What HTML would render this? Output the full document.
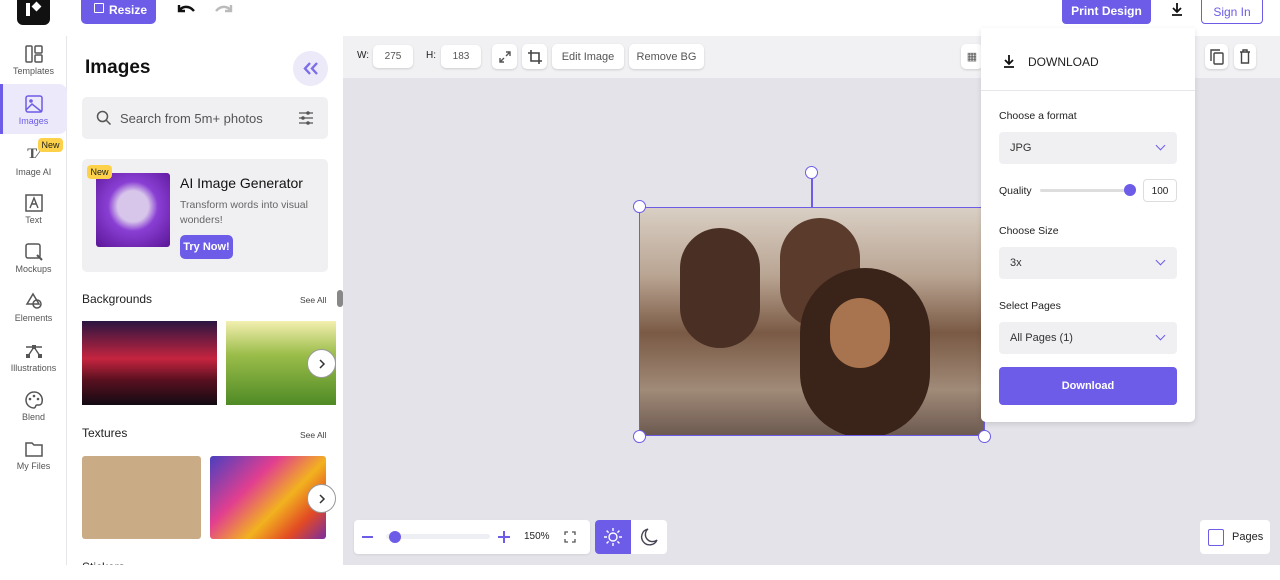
<!DOCTYPE html><html><head><style>
*{box-sizing:border-box;margin:0;padding:0}
body{width:1280px;height:580px;overflow:hidden;font-family:"Liberation Sans",sans-serif;background:#fff;position:relative;color:#222}
.abs{position:absolute}
.side{left:0;top:36px;width:67px;height:529px;background:#fff;border-right:1px solid #e6e6ea}
.si{position:absolute;left:0;width:67px;text-align:center;font-size:9px;color:#555}
.si svg{display:block;margin:0 auto 3px}
.btn{background:#fff;border-radius:5px;box-shadow:0 1px 2px rgba(0,0,0,.15);font-size:11px;color:#555;display:flex;align-items:center;justify-content:center}
.dd{position:absolute;left:999px;width:178px;height:32px;background:#f0f0f3;border-radius:4px;font-size:11px;color:#333;padding:10px 11px}
.dd:after{content:"";position:absolute;right:13px;top:10px;width:6px;height:6px;border-right:1.5px solid #6c5ce7;border-bottom:1.5px solid #6c5ce7;transform:rotate(45deg)}
.lbl{position:absolute;left:999px;font-size:11px;color:#222}
.arr{position:absolute;width:29px;height:29px;border-radius:50%;background:#fff;border:1px solid #999}
</style></head><body>
<!-- top bar -->
<div class="abs" style="left:17px;top:0;width:33px;height:25px;background:#111;border-radius:0 0 6px 6px"><div class="abs" style="left:9px;top:3px;width:4px;height:13px;background:#fff"></div><div class="abs" style="left:16px;top:3px;width:7px;height:7px;background:#fff;transform:rotate(45deg)"></div></div>
<div class="abs" style="left:81px;top:-6px;width:75px;height:30px;background:#6c5ce7;border-radius:5px;color:#fff;font-weight:bold;font-size:12px;padding:9px 0 0 28px">Resize<div class="abs" style="left:13px;top:9px;width:10px;height:10px;border:1.5px solid #fff;border-radius:1px"></div></div>
<svg class="abs" style="left:175px;top:2px" width="22" height="14"><path d="M4 3v6h6M4 9c3-5 10-6 15 0" fill="none" stroke="#111" stroke-width="2.4"/></svg>
<svg class="abs" style="left:213px;top:2px" width="22" height="14"><path d="M18 3v6h-6M18 9c-3-5-10-6-15 0" fill="none" stroke="#bbb" stroke-width="2.4"/></svg>
<div class="abs" style="left:1062px;top:-6px;width:89px;height:30px;background:#6c5ce7;border-radius:4px;color:#fff;font-size:12px;font-weight:bold;padding-top:10px;text-align:center">Print Design</div>
<svg class="abs" style="left:1170px;top:2px" width="14" height="14"><path d="M7 1v9M3 6l4 4 4-4M2 13h10" fill="none" stroke="#111" stroke-width="1.8"/></svg>
<div class="abs" style="left:1201px;top:-6px;width:62px;height:30px;border:1px solid #6c5ce7;border-radius:4px;color:#6c5ce7;font-size:12px;padding-top:10px;text-align:center">Sign In</div>
<!-- canvas area -->
<div class="abs" style="left:343px;top:36px;width:937px;height:529px;background:#e3e3e9"></div>
<div class="abs" style="left:343px;top:36px;width:937px;height:42px;background:#f1f1f4"></div>
<div class="abs" style="left:357px;top:50px;font-size:10px">W:</div>
<div class="abs btn" style="left:373px;top:45px;width:40px;height:23px;font-size:10px">275</div>
<div class="abs" style="left:426px;top:50px;font-size:10px">H:</div>
<div class="abs btn" style="left:441px;top:45px;width:40px;height:23px;font-size:10px">183</div>
<div class="abs btn" style="left:492px;top:44px;width:25px;height:25px"><svg width="14" height="14"><path d="M8 2h4v4M12 2L8 6M6 12H2V8M2 12l4-4" fill="none" stroke="#555" stroke-width="1.4"/></svg></div>
<div class="abs btn" style="left:522px;top:44px;width:25px;height:25px"><svg width="16" height="16"><path d="M4 1v11h11M1 4h11v11" fill="none" stroke="#444" stroke-width="1.6"/></svg></div>
<div class="abs btn" style="left:552px;top:44px;width:72px;height:25px">Edit Image</div>
<div class="abs btn" style="left:629px;top:44px;width:75px;height:25px">Remove BG</div>
<div class="abs btn" style="left:961px;top:44px;width:22px;height:25px">▦</div>
<div class="abs btn" style="left:1205px;top:44px;width:23px;height:25px"><svg width="14" height="16"><rect x="4" y="4" width="9" height="11" rx="1" fill="none" stroke="#444" stroke-width="1.4"/><path d="M1 12V1h9" fill="none" stroke="#444" stroke-width="1.4"/></svg></div>
<div class="abs btn" style="left:1234px;top:44px;width:22px;height:25px"><svg width="12" height="15"><path d="M1 3h10M4 3V1h4v2M2.5 3v11h7V3" fill="none" stroke="#444" stroke-width="1.4"/></svg></div>
<!-- image -->
<div class="abs" style="left:639px;top:207px;width:346px;height:229px;background:linear-gradient(180deg,#d9cfc4 0%,#b9a492 30%,#7a5a45 55%,#a08a78 80%,#6d5a50 100%);border:1.5px solid #6c5ce7;overflow:hidden">
<div class="abs" style="left:40px;top:20px;width:80px;height:120px;background:#4a2f24;border-radius:40px"></div>
<div class="abs" style="left:140px;top:10px;width:80px;height:110px;background:#5a3b2c;border-radius:40px"></div>
<div class="abs" style="left:160px;top:60px;width:130px;height:170px;background:#3a2318;border-radius:65px"></div>
<div class="abs" style="left:190px;top:90px;width:60px;height:70px;background:#a8734f;border-radius:30px"></div>
</div>
<div class="abs" style="left:811px;top:178px;width:1.5px;height:29px;background:#6c5ce7"></div>
<div class="abs" style="left:805px;top:166px;width:13px;height:13px;border:1.5px solid #6c5ce7;border-radius:50%;background:#fff"></div>
<div class="abs" style="left:633px;top:200px;width:13px;height:13px;border:1.5px solid #6c5ce7;border-radius:50%;background:#fff"></div>
<div class="abs" style="left:633px;top:430px;width:13px;height:13px;border:1.5px solid #6c5ce7;border-radius:50%;background:#fff"></div>
<div class="abs" style="left:978px;top:430px;width:13px;height:13px;border:1.5px solid #6c5ce7;border-radius:50%;background:#fff"></div>
<!-- zoom bar -->
<div class="abs" style="left:354px;top:520px;width:236px;height:34px;background:#fff;border-radius:4px;box-shadow:0 1px 2px rgba(0,0,0,.08)"></div>
<div class="abs" style="left:362px;top:536px;width:11px;height:2px;background:#6c5ce7"></div>
<div class="abs" style="left:386px;top:534px;width:104px;height:5px;background:#eeeff4;border-radius:3px"></div>
<div class="abs" style="left:389px;top:531px;width:12px;height:12px;border-radius:50%;background:#6c5ce7"></div>
<div class="abs" style="left:498px;top:536px;width:12px;height:2px;background:#6c5ce7"></div>
<div class="abs" style="left:503px;top:531px;width:2px;height:12px;background:#6c5ce7"></div>
<div class="abs" style="left:524px;top:531px;font-size:10px">150%</div>
<svg class="abs" style="left:564px;top:531px" width="12" height="12"><path d="M1 4V1h3M8 1h3v3M11 8v3H8M4 11H1V8" fill="none" stroke="#555" stroke-width="1.3"/></svg>
<div class="abs" style="left:595px;top:520px;width:72px;height:34px;background:#fff;border-radius:4px"></div>
<div class="abs" style="left:595px;top:520px;width:36px;height:34px;background:#6c5ce7;border-radius:4px 0 0 4px"></div>
<svg class="abs" style="left:603px;top:527px" width="20" height="20"><circle cx="10" cy="10" r="4" fill="none" stroke="#fff" stroke-width="1.4"/><path d="M10 1v3M10 16v3M1 10h3M16 10h3M3.6 3.6l2 2M14.4 14.4l2 2M3.6 16.4l2-2M14.4 5.6l2-2" stroke="#fff" stroke-width="1.4"/></svg>
<svg class="abs" style="left:639px;top:527px" width="20" height="20"><path d="M9 2a8 8 0 109 11A7 7 0 019 2z" fill="none" stroke="#445" stroke-width="1.4"/></svg>
<div class="abs" style="left:1200px;top:520px;width:70px;height:34px;background:#fff;border-radius:4px;font-size:11px;padding:11px 0 0 32px">Pages<div class="abs" style="left:8px;top:9px;width:16px;height:17px;border:1.5px solid #6c5ce7;border-radius:2px"></div></div>
<!-- download panel -->
<div class="abs" style="left:981px;top:28px;width:214px;height:394px;background:#fff;box-shadow:0 2px 6px rgba(0,0,0,.12);border-radius:0 0 5px 5px"></div>
<svg class="abs" style="left:1003px;top:54px" width="12" height="14"><path d="M6 1v9M2 6l4 4 4-4M1 13h10" fill="none" stroke="#111" stroke-width="1.8"/></svg>
<div class="abs" style="left:1028px;top:55px;font-size:12px">DOWNLOAD</div>
<div class="abs" style="left:981px;top:90px;width:214px;height:1px;background:#e6e6ea"></div>
<div class="lbl" style="top:110px;font-size:10.5px">Choose a format</div>
<div class="dd" style="top:132px">JPG</div>
<div class="lbl" style="top:185px;font-size:10.5px">Quality</div>
<div class="abs" style="left:1040px;top:189px;width:94px;height:3px;background:#ddd;border-radius:2px"></div>
<div class="abs" style="left:1124px;top:184px;width:12px;height:12px;border-radius:50%;background:#6c5ce7"></div>
<div class="abs" style="left:1143px;top:179px;width:34px;height:23px;border:1px solid #ddd;border-radius:4px;font-size:10px;text-align:center;padding-top:6px">100</div>
<div class="lbl" style="top:225px;font-size:10.5px">Choose Size</div>
<div class="dd" style="top:247px">3x</div>
<div class="lbl" style="top:300px;font-size:10.5px">Select Pages</div>
<div class="dd" style="top:322px">All Pages (1)</div>
<div class="abs" style="left:999px;top:367px;width:178px;height:38px;background:#6c5ce7;border-radius:4px;color:#fff;font-size:11px;font-weight:bold;text-align:center;padding-top:13px">Download</div>
<!-- sidebar -->
<div class="abs side"></div>
<div class="abs" style="left:0;top:84px;width:67px;height:50px;background:#ece9fb;border-radius:0 8px 8px 0;border-left:3px solid #6c5ce7"></div>
<div class="si" style="top:45px"><svg width="18" height="18"><rect x="1" y="1" width="6" height="16" rx="1" fill="none" stroke="#555" stroke-width="1.5"/><rect x="10" y="1" width="7" height="7" rx="1" fill="none" stroke="#555" stroke-width="1.5"/><rect x="10" y="10" width="7" height="7" rx="1" fill="none" stroke="#555" stroke-width="1.5"/></svg>Templates</div>
<div class="si" style="top:95px;color:#6c5ce7"><svg width="18" height="18"><rect x="1" y="1" width="16" height="16" rx="2" fill="none" stroke="#6c5ce7" stroke-width="1.5"/><circle cx="6" cy="6" r="1.8" fill="#6c5ce7"/><path d="M1 15l6-6 10 8" fill="none" stroke="#6c5ce7" stroke-width="1.5"/></svg>Images</div>
<div class="si" style="top:146px"><div style="font-family:'Liberation Serif';font-weight:bold;font-size:15px;height:18px;margin-bottom:3px">T⁄</div>Image AI</div>
<div class="abs" style="left:38px;top:138px;width:25px;height:14px;background:#fdd14a;border-radius:4px;font-size:9px;text-align:center;padding-top:2px">New</div>
<div class="si" style="top:194px"><svg width="18" height="18"><rect x="1" y="1" width="16" height="16" fill="none" stroke="#555" stroke-width="1.5"/><path d="M5 14L9 4l4 10M6.5 10h5" fill="none" stroke="#555" stroke-width="1.4"/></svg>Text</div>
<div class="si" style="top:243px"><svg width="18" height="18"><rect x="1" y="1" width="14" height="14" rx="2" fill="none" stroke="#555" stroke-width="1.5"/><path d="M12 12l5 5" stroke="#555" stroke-width="2"/></svg>Mockups</div>
<div class="si" style="top:292px"><svg width="18" height="18"><path d="M8 2l6 10H2z" fill="none" stroke="#555" stroke-width="1.5"/><circle cx="12" cy="12" r="4" fill="none" stroke="#555" stroke-width="1.5"/></svg>Elements</div>
<div class="si" style="top:342px"><svg width="20" height="18"><path d="M2 5h16M10 5l-6 9M10 5l6 9" fill="none" stroke="#555" stroke-width="1.4"/><rect x="8" y="3" width="4" height="4" fill="#555"/><rect x="2" y="12" width="4" height="4" fill="#555"/><rect x="14" y="12" width="4" height="4" fill="#555"/></svg>Illustrations</div>
<div class="si" style="top:391px"><svg width="18" height="18"><path d="M9 1a8 8 0 100 16c2 0 1-3 3-3h2a3 3 0 003-3A8 8 0 009 1z" fill="none" stroke="#555" stroke-width="1.5"/><circle cx="5" cy="8" r="1.3" fill="#555"/><circle cx="9" cy="5" r="1.3" fill="#555"/><circle cx="13" cy="8" r="1.3" fill="#555"/></svg>Blend</div>
<div class="si" style="top:440px"><svg width="18" height="18"><path d="M1 3h6l2 2h8v11H1z" fill="none" stroke="#555" stroke-width="1.5"/></svg>My Files</div>
<!-- panel -->
<div class="abs" style="left:67px;top:36px;width:276px;height:529px;background:#fff;border-radius:0 22px 0 0;overflow:hidden">
<div class="abs" style="left:18px;top:21px;font-size:19px;font-weight:bold;color:#111">Images</div>
<div class="abs" style="left:226px;top:15px;width:35px;height:35px;border-radius:50%;background:#ece9f8"><svg style="position:absolute;left:10px;top:11px" width="16" height="13"><path d="M7 1L2 6.5 7 12M14 1L9 6.5 14 12" fill="none" stroke="#7b6ee8" stroke-width="2.4"/></svg></div>
<div class="abs" style="left:15px;top:61px;width:246px;height:42px;background:#f0f0f3;border-radius:5px;font-size:13px;color:#555;padding:14px 0 0 38px">Search from 5m+ photos
<svg class="abs" style="left:14px;top:13px" width="16" height="16"><circle cx="6.5" cy="6.5" r="5" fill="none" stroke="#555" stroke-width="1.5"/><path d="M10 10l4.5 4.5" stroke="#555" stroke-width="1.5"/></svg>
<svg class="abs" style="left:216px;top:13px" width="16" height="16"><path d="M1 3h14M1 8h14M1 13h14" stroke="#555" stroke-width="1.3"/><circle cx="10" cy="3" r="1.8" fill="#555"/><circle cx="5" cy="8" r="1.8" fill="#555"/><circle cx="10" cy="13" r="1.8" fill="#555"/></svg></div>
<div class="abs" style="left:15px;top:123px;width:246px;height:113px;background:#f0f0f3;border-radius:5px"></div>
<div class="abs" style="left:29px;top:137px;width:74px;height:74px;border-radius:3px;background:radial-gradient(circle at 50% 45%,#d7c6ea 0 28%,#8a3fd4 45%,#5a1596 100%)"></div>
<div class="abs" style="left:20px;top:129px;width:25px;height:14px;background:#fdd14a;border-radius:4px;font-size:9px;text-align:center;padding-top:2px">New</div>
<div class="abs" style="left:113px;top:139px;font-size:14px;color:#111">AI Image Generator</div>
<div class="abs" style="left:113px;top:162px;font-size:10.5px;color:#666;line-height:15px;width:140px">Transform words into visual wonders!</div>
<div class="abs" style="left:113px;top:199px;width:53px;height:24px;background:#6c5ce7;border-radius:5px;color:#fff;font-size:11px;font-weight:bold;text-align:center;padding-top:6px">Try Now!</div>
<div class="abs" style="left:15px;top:256px;font-size:12px">Backgrounds</div>
<div class="abs" style="left:233px;top:259px;font-size:8.5px;color:#444">See All</div>
<div class="abs" style="left:15px;top:285px;width:135px;height:84px;background:linear-gradient(180deg,#2a1540 0%,#c6243f 45%,#5a1020 70%,#120a12 100%)"></div>
<div class="abs" style="left:159px;top:285px;width:110px;height:84px;background:linear-gradient(180deg,#f3efb0 0%,#9bbd4a 40%,#4f8a25 100%)"></div>
<div class="arr" style="left:240px;top:313px"><svg style="position:absolute;left:10px;top:9px" width="8" height="10"><path d="M2 1l4 4-4 4" fill="none" stroke="#333" stroke-width="1.5"/></svg></div>
<div class="abs" style="left:15px;top:390px;font-size:12px">Textures</div>
<div class="abs" style="left:233px;top:394px;font-size:8.5px;color:#444">See All</div>
<div class="abs" style="left:15px;top:420px;width:119px;height:83px;background:#c9ac85;border-radius:3px"></div>
<div class="abs" style="left:143px;top:420px;width:116px;height:83px;border-radius:3px;background:linear-gradient(135deg,#4a3fc0,#e23f8f 35%,#f2b21f 60%,#e24a24 80%,#7a2da0)"></div>
<div class="arr" style="left:240px;top:448px"><svg style="position:absolute;left:10px;top:9px" width="8" height="10"><path d="M2 1l4 4-4 4" fill="none" stroke="#333" stroke-width="1.5"/></svg></div>
<div class="abs" style="left:15px;top:524px;font-size:12px">Stickers</div>
<div class="abs" style="left:270px;top:254px;width:6px;height:17px;background:#888;border-radius:3px"></div>
</div>
</body></html>
